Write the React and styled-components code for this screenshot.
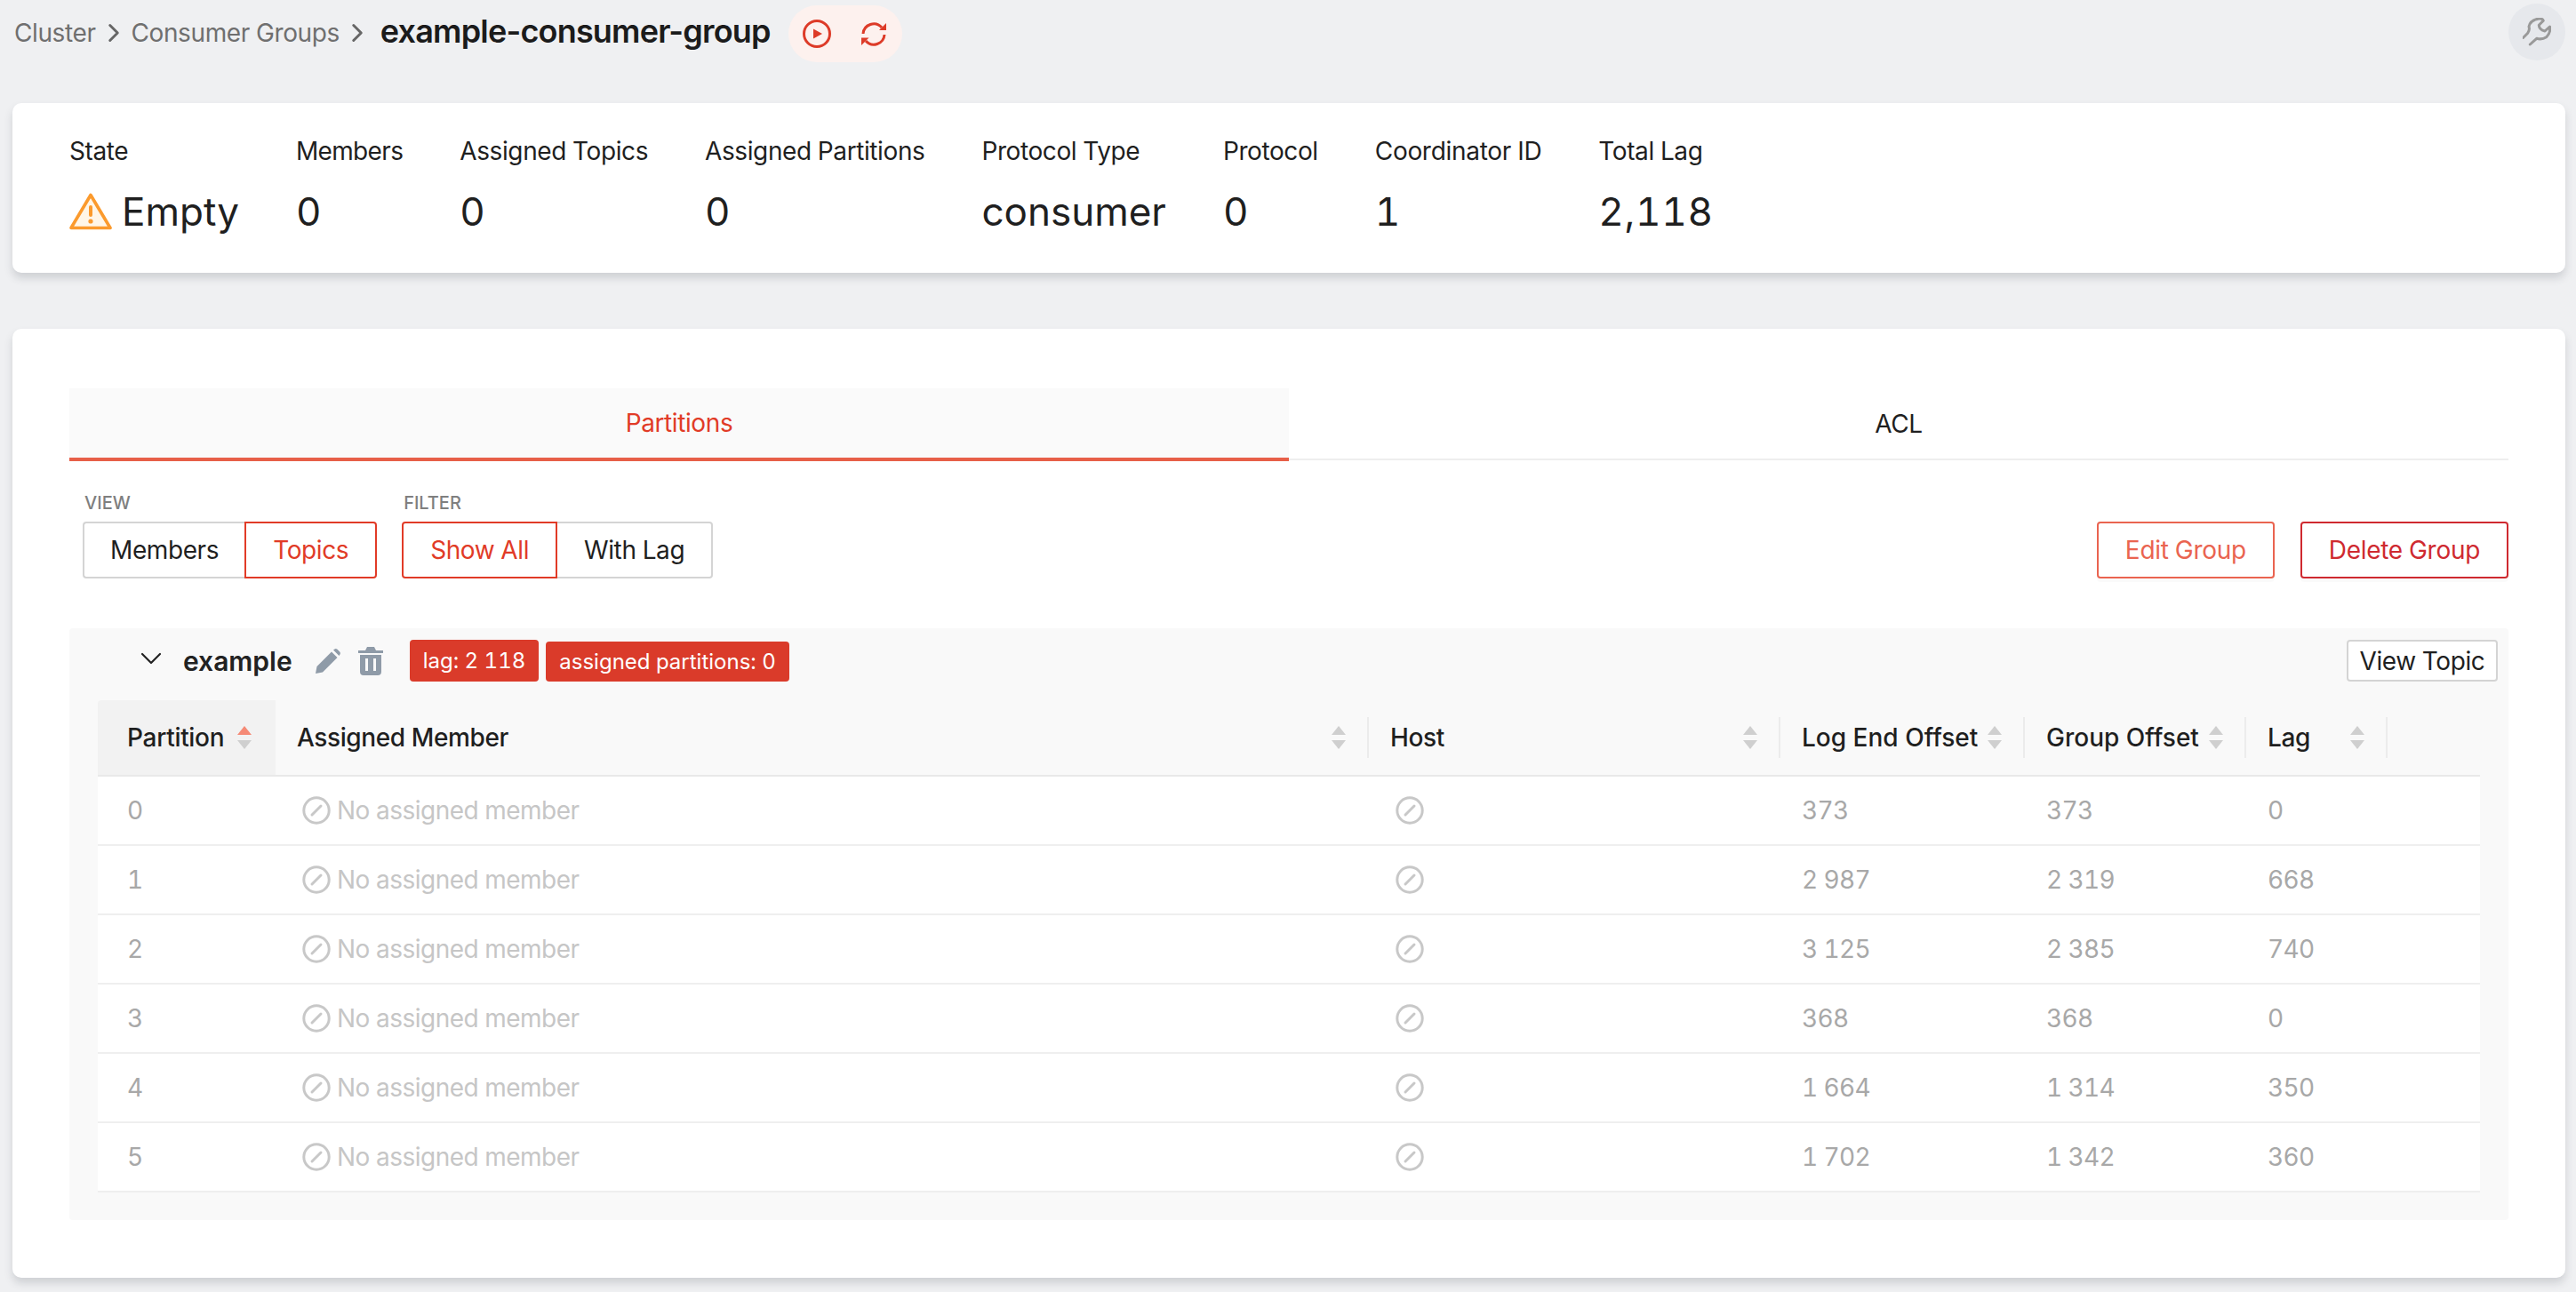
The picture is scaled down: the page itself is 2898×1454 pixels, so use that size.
import React from "react";
import styled, { createGlobalStyle } from "styled-components";
import { ChevronRight, ChevronDown } from "lucide-react";

const Global = createGlobalStyle`
  html, body { margin: 0; padding: 0; background: #eff0f2; }
  body {
    font-family: Inter, "Noto Sans", sans-serif;
    font-variant-numeric: tabular-nums;
    letter-spacing: -0.4px;
    color: #1f1f1f;
  }
  * { box-sizing: border-box; }
`;

const Page = styled.div`
  width: 2898px;
  height: 1454px;
  overflow: hidden;
  padding: 0 12px 0 14px;
`;

const TopBar = styled.div`
  display: flex;
  align-items: flex-start;
  height: 116px;
  padding: 4px 0 0 2px;
`;

const Crumb = styled.span`
  font-size: 28px;
  line-height: 34px;
  color: #6f6f6f;
`;

const CrumbRow = styled.div`
  display: flex;
  align-items: center;
  height: 66px;
  gap: 3px;
  svg { color: #666; flex: none; }
`;

const PageTitle = styled.h1`
  margin: 0 0 4px 6px;
  font-size: 36px;
  line-height: 40px;
  font-weight: 600;
  font-variant-numeric: normal;
  letter-spacing: -0.8px;
  color: #1b1b1b;
  white-space: nowrap;
`;

const ActionPill = styled.div`
  display: flex;
  align-items: center;
  gap: 34px;
  height: 64px;
  margin: 2px 0 0 20px;
  padding: 0 18px 0 16px;
  border-radius: 32px;
  background: #fdf1ee;
`;

const WrenchButton = styled.div`
  margin-left: auto;
  width: 64px;
  height: 64px;
  border-radius: 50%;
  background: #e6e8ec;
  display: flex;
  align-items: center;
  justify-content: center;
`;

const Card = styled.section`
  background: #fff;
  width: 2872px;
  border-radius: 10px;
  box-shadow: 0 6px 10px rgba(60, 64, 75, 0.18);
`;

const MetricsCard = styled(Card)`
  height: 191px;
  padding: 36px 64px;
  display: flex;
  gap: 64px;
`;

const Metric = styled.div`
  display: flex;
  flex-direction: column;
`;

const MetricLabel = styled.div`
  font-size: 28px;
  line-height: 36px;
  letter-spacing: ${(p) => p.$tracking ?? -0.4}px;
  color: #1f1f1f;
  white-space: nowrap;
`;

const MetricValue = styled.div`
  display: flex;
  align-items: center;
  gap: 11px;
  margin-top: 23px;
  font-size: 44px;
  line-height: 54px;
  letter-spacing: ${(p) => p.$tracking ?? 0}px;
  color: #1f1f1f;
  white-space: nowrap;
`;

const MainCard = styled(Card)`
  height: 1068px;
  margin-top: 63px;
  padding: 67px 64px 0;
`;

const Tabs = styled.div`
  display: flex;
`;

const Tab = styled.div`
  flex: 1;
  height: 82px;
  display: flex;
  align-items: center;
  justify-content: center;
  font-size: 28px;
  color: ${(p) => (p.$active ? "#e13b27" : "#1f1f1f")};
  background: ${(p) => (p.$active ? "#fafafa" : "#fff")};
  border-bottom: ${(p) => (p.$active ? "4px solid #e75f48" : "2px solid #eee")};
  ${(p) => !p.$active && "height: 81px;"}
`;

const Toolbar = styled.div`
  display: flex;
  align-items: flex-end;
  height: 132px;
  padding: 0 0 0 15px;
  gap: 28px;
`;

const Field = styled.div`
  display: flex;
  flex-direction: column;
`;

const FieldLabel = styled.div`
  font-size: 20px;
  line-height: 24px;
  font-weight: 500;
  letter-spacing: 0;
  color: #7f7f7f;
  padding-left: 2px;
  margin-bottom: 9px;
`;

const Segments = styled.div`
  display: flex;
`;

const Segment = styled.button`
  height: 64px;
  padding: 0 ${(p) => p.$pad || 30}px;
  font: inherit;
  font-size: 28px;
  letter-spacing: -0.4px;
  background: #fff;
  color: ${(p) => (p.$active ? "#e13b27" : "#1f1f1f")};
  border: 2px solid ${(p) => (p.$active ? "#e13b27" : "#d4d4d4")};
  border-left-width: ${(p) => (p.$joinLeft ? 0 : 2)}px;
  border-right-width: ${(p) => (p.$joinRight ? 0 : 2)}px;
  border-radius: ${(p) => (p.$first ? "4px 0 0 4px" : "0 4px 4px 0")};
`;

const Spacer = styled.div`
  flex: 1;
`;

const OutlineButton = styled.button`
  height: 64px;
  padding: 0 30px;
  margin-left: ${(p) => p.$left || 0}px;
  font: inherit;
  font-size: 28px;
  letter-spacing: -0.3px;
  background: #fff;
  color: ${(p) => p.$color};
  border: 2px solid ${(p) => p.$color};
  border-radius: 4px;
  box-shadow: 0 4px 0 rgba(0, 0, 0, 0.02);
`;

const TopicPanel = styled.div`
  margin-top: 56px;
  height: 666px;
  background: #f9f9f9;
  border-radius: 4px;
  padding: 0 32px;
`;

const TopicHead = styled.div`
  display: flex;
  align-items: flex-start;
  height: 81px;
  padding-top: 13px;
  margin-right: -20px;
`;

const Collapse = styled.div`
  flex: none;
  width: 40px;
  height: 40px;
  margin: 1px 0 0 40px;
  color: #222;
  svg { display: block; }
`;

const TopicName = styled.div`
  margin-left: 16px;
  font-size: 30px;
  line-height: 48px;
  font-weight: 600;
  letter-spacing: 0;
  color: #222;
`;

const TopicIcon = styled.svg`
  color: #8f9ba8;
  flex: none;
  margin-top: ${(p) => p.$top}px;
  margin-left: ${(p) => p.$left}px;
`;

const Badge = styled.span`
  margin-left: ${(p) => p.$left}px;
  margin-top: ${(p) => p.$top || 0}px;
  height: ${(p) => p.$h}px;
  display: inline-flex;
  align-items: center;
  padding: 0 15px;
  border-radius: 4px;
  background: #da3b2a;
  color: #fff;
  font-size: 24px;
  letter-spacing: 0;
  white-space: nowrap;
`;

const ViewTopic = styled.button`
  margin-left: auto;
  height: 47px;
  width: 170px;
  padding: 0;
  font: inherit;
  font-size: 28px;
  letter-spacing: -0.4px;
  background: #fff;
  color: #1f1f1f;
  border: 2px solid #d4d4d4;
  border-radius: 4px;
`;

const Table = styled.table`
  width: 2680px;
  border-collapse: collapse;
  table-layout: fixed;
`;

const HeadCell = styled.th`
  position: relative;
  height: 85px;
  padding: 0 24px;
  font-size: 28px;
  font-weight: 500;
  letter-spacing: ${(p) => p.$tracking ?? -0.4}px;
  text-align: left;
  color: #1f1f1f;
  background: ${(p) => (p.$sorted ? "#f2f2f2" : "transparent")};
  border-bottom: 2px solid #e9e9e9;
  ${(p) => p.$sorted && "padding-left: 33px; border-radius: 4px 0 0 0;"}
  &::after {
    content: ${(p) => (p.$sep ? '""' : "none")};
    position: absolute;
    right: 0;
    top: 19px;
    height: 46px;
    width: 2px;
    background: #ececec;
  }
`;

const HeadInner = styled.div`
  display: flex;
  align-items: center;
  justify-content: space-between;
  white-space: nowrap;
`;

const SortArrows = styled.svg`
  flex: none;
  margin-right: ${(p) => p.$right || 0}px;
`;

const Row = styled.tr`
  background: #fff;
`;

const Cell = styled.td`
  height: 78px;
  padding: 0 24px;
  font-size: 28px;
  letter-spacing: ${(p) => (p.$dim ? "-0.5px" : "-0.6px")};
  color: ${(p) => (p.$dim ? "#c6c6c6" : "#a8a8a8")};
  border-bottom: 2px solid #efefef;
  ${(p) => p.$first && "padding-left: 33px;"}
`;

const NoMember = styled.div`
  display: flex;
  align-items: center;
  gap: 7px;
  padding-left: 6px;
`;

const columns = [
  { title: "Partition", width: 200, sorted: true, arrowRight: 3, tracking: -0.3 },
  { title: "Assigned Member", width: 1230, sep: true, arrowRight: 2 },
  { title: "Host", width: 463, sep: true, arrowRight: 2 },
  { title: "Log End Offset", width: 275, sep: true, arrowRight: 2, tracking: 0 },
  { title: "Group Offset", width: 249, sep: true, arrowRight: 2, tracking: 0 },
  { title: "Lag", width: 159, sep: true, arrowRight: 2 },
];

const rows = [
  ["0", "373", "373", "0"],
  ["1", "2 987", "2 319", "668"],
  ["2", "3 125", "2 385", "740"],
  ["3", "368", "368", "0"],
  ["4", "1 664", "1 314", "350"],
  ["5", "1 702", "1 342", "360"],
];

function Arrows({ sorted, right }) {
  return (
    <SortArrows width="16" height="26" viewBox="0 0 16 26" $right={right}>
      <path d="M8 0 L16 10 L0 10 Z" fill={sorted ? "#f58a76" : "#cfcfcf"} />
      <path d="M0 16 L16 16 L8 26 Z" fill="#cfcfcf" />
    </SortArrows>
  );
}

function Blocked() {
  return (
    <svg width="32" height="32" viewBox="0 0 32 32" fill="none" stroke="#c8c8c8" strokeWidth="3" style={{ flex: "none" }}>
      <circle cx="16" cy="16" r="14.2" />
      <path d="M11 21 L21 11" strokeLinecap="round" />
    </svg>
  );
}

function PlayCircle() {
  return (
    <svg width="32" height="32" viewBox="0 0 32 32" fill="none">
      <circle cx="16" cy="16" r="14.5" stroke="#dd3b28" strokeWidth="3" />
      <path d="M12 10.5 L22 16 L12 21.5 Z" fill="#dd3b28" />
    </svg>
  );
}

function SyncIcon() {
  return (
    <svg width="28" height="29" viewBox="0 0 28 29" fill="none">
      <path d="M2 14 A12 12 0 0 1 23 7" stroke="#dd3b28" strokeWidth="3" />
      <path d="M28 2 V10 H20 Z" fill="#dd3b28" />
      <path d="M26 15 A12 12 0 0 1 5 22" stroke="#dd3b28" strokeWidth="3" />
      <path d="M0 27 V18.5 H8.5 Z" fill="#dd3b28" />
    </svg>
  );
}

function WarningIcon() {
  return (
    <svg width="48" height="42" viewBox="0 0 48 42" fill="none">
      <path d="M24 2.5 L46 39.5 H2 Z" stroke="#fb9a2d" strokeWidth="3.6" strokeLinejoin="round" fill="#fff6e8" />
      <path d="M24 16 V25" stroke="#fb9a2d" strokeWidth="4" strokeLinecap="round" />
      <circle cx="24" cy="32" r="2.6" fill="#fb9a2d" />
    </svg>
  );
}

function WrenchIcon() {
  return (
    <svg width="32" height="32" viewBox="0 0 32 32" fill="none" stroke="#999" strokeWidth="3" strokeLinecap="round" strokeLinejoin="round">
      <path d="M0.5 22.5 L5.7 17.3 Q8.3 13.3 7 10 Q8.3 2.7 18.3 0.9 Q22.3 0.7 23.3 3.3 L18.3 8.3 Q18.3 13.3 25 15 L30.5 10 Q31.7 16.7 26.7 21.7 Q21.7 25 15.7 23.3 L8.3 30" />
    </svg>
  );
}

const metrics = [
  { label: "State", value: "Empty", icon: true },
  { label: "Members", value: "0", tracking: -0.65 },
  { label: "Assigned Topics", value: "0" },
  { label: "Assigned Partitions", value: "0" },
  { label: "Protocol Type", value: "consumer" },
  { label: "Protocol", value: "0" },
  { label: "Coordinator ID", value: "1", tracking: -0.3 },
  { label: "Total Lag", value: "2,118", valueTracking: 0.7 },
];

export default function App() {
  return (
    <Page>
      <Global />
      <TopBar>
        <CrumbRow>
          <Crumb>Cluster</Crumb>
          <ChevronRight size={34} strokeWidth={2.1} />
          <Crumb>Consumer Groups</Crumb>
          <ChevronRight size={34} strokeWidth={2.1} />
          <PageTitle>example-consumer-group</PageTitle>
        </CrumbRow>
        <ActionPill>
          <PlayCircle />
          <SyncIcon />
        </ActionPill>
        <WrenchButton>
          <WrenchIcon />
        </WrenchButton>
      </TopBar>

      <MetricsCard>
        {metrics.map((m) => (
          <Metric key={m.label}>
            <MetricLabel $tracking={m.tracking}>{m.label}</MetricLabel>
            <MetricValue $tracking={m.valueTracking}>
              {m.icon && <WarningIcon />}
              {m.value}
            </MetricValue>
          </Metric>
        ))}
      </MetricsCard>

      <MainCard>
        <Tabs>
          <Tab $active>Partitions</Tab>
          <Tab>ACL</Tab>
        </Tabs>
        <Toolbar>
          <Field>
            <FieldLabel>VIEW</FieldLabel>
            <Segments>
              <Segment $first $joinRight $pad={29}>Members</Segment>
              <Segment $active>Topics</Segment>
            </Segments>
          </Field>
          <Field>
            <FieldLabel>FILTER</FieldLabel>
            <Segments>
              <Segment $first $active>Show All</Segment>
              <Segment $joinLeft>With Lag</Segment>
            </Segments>
          </Field>
          <Spacer />
          <OutlineButton $color="#ea6450">Edit Group</OutlineButton>
          <OutlineButton $color="#cf2a30" $left={1}>Delete Group</OutlineButton>
        </Toolbar>

        <TopicPanel>
          <TopicHead>
            <Collapse>
              <ChevronDown size={40} strokeWidth={1.3} />
            </Collapse>
            <TopicName>example</TopicName>
            <TopicIcon $top={10} $left={26} width="28" height="28" viewBox="0 0 28 28" fill="currentColor">
              <path d="M0 28 L1.5 20 L18 3.5 L24.5 10 L8 26.5 Z M20 1.5 L21.5 0.4 Q23 -0.4 24.5 0.8 L27.2 3.5 Q28.4 5 27.4 6.5 L26.5 8 Z" />
            </TopicIcon>
            <TopicIcon $top={8} $left={20} width="28" height="32" viewBox="0 0 28 32" fill="currentColor">
              <path d="M0 4 H8 L10 0 H18 L20 4 H28 V7 H0 Z M2 9 H26 V28 Q26 32 22 32 H6 Q2 32 2 28 Z M8 13 V27 H11 V13 Z M17 13 V27 H20 V13 Z" fillRule="evenodd" />
            </TopicIcon>
            <Badge $left={30} $h={47}>lag: 2 118</Badge>
            <Badge $left={8} $top={2} $h={45}>assigned partitions: 0</Badge>
            <ViewTopic>View Topic</ViewTopic>
          </TopicHead>
          <Table>
            <colgroup>
              {columns.map((c) => (
                <col key={c.title} width={c.width} />
              ))}
              <col />
            </colgroup>
            <thead>
              <tr>
                {columns.map((c) => (
                  <HeadCell key={c.title} $sorted={c.sorted} $sep={c.sep} $tracking={c.tracking}>
                    <HeadInner>
                      {c.title}
                      <Arrows sorted={c.sorted} right={c.arrowRight} />
                    </HeadInner>
                  </HeadCell>
                ))}
                <HeadCell />
              </tr>
            </thead>
            <tbody>
              {rows.map((r) => (
                <Row key={r[0]}>
                  <Cell $first>{r[0]}</Cell>
                  <Cell $dim>
                    <NoMember>
                      <Blocked />
                      No assigned member
                    </NoMember>
                  </Cell>
                  <Cell $dim>
                    <NoMember>
                      <Blocked />
                    </NoMember>
                  </Cell>
                  <Cell>{r[1]}</Cell>
                  <Cell>{r[2]}</Cell>
                  <Cell>{r[3]}</Cell>
                  <Cell />
                </Row>
              ))}
            </tbody>
          </Table>
        </TopicPanel>
      </MainCard>
    </Page>
  );
}
